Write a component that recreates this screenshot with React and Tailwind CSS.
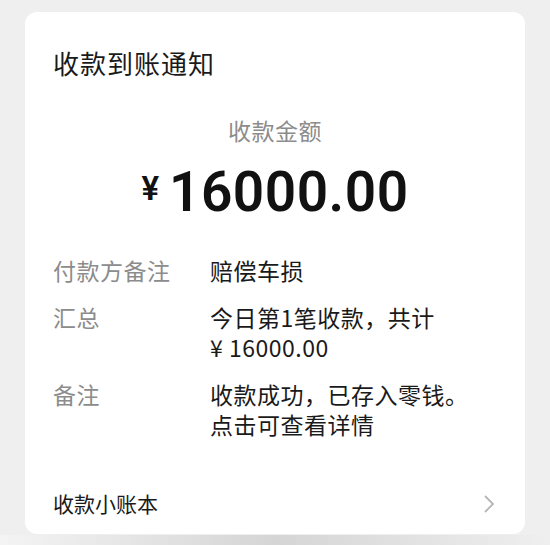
import React from 'react'

const rows = [
  { label: "付款方备注", lines: ["赔偿车损"] },
  { label: "汇总", lines: ["今日第1笔收款，共计", "¥ 16000.00"] },
  { label: "备注", lines: ["收款成功，已存入零钱。", "点击可查看详情"] },
];

const PayNotice = () => {
  return (
    <div className="w-[550px] h-[545px] bg-[#efefef] flex flex-col pt-[12px] overflow-hidden"
      style={{ fontFamily: '"Noto Sans CJK SC", "Noto Sans", sans-serif' }}>
      <div className="ml-[25px] w-[500px] h-[523px] bg-white rounded-xl flex flex-col px-[28px] pt-[33px] pb-[15px]">
        <h1 className="text-[26px] leading-[36px] text-[#1a1a1a] tracking-[1px]">收款到账通知</h1>

        <div className="mt-[33px] text-center text-[23px] leading-[32px] text-[#8c8c8c] tracking-[0.5px]">收款金额</div>
        <div className="mt-[14px] h-[64px] flex items-center justify-center gap-[10px] text-[#111] font-semibold"
          style={{ fontFamily: 'Roboto, "Noto Sans", sans-serif' }}>
          <span className="text-[33px] leading-none mt-[-8px]">¥</span>
          <span className="text-[55px] leading-none tracking-[0.5px]">16000.00</span>
        </div>

        <div className="mt-[31px] flex flex-col gap-[17px]">
          {rows.map((r) => (
            <div key={r.label} className="flex text-[23px] leading-[30px]">
              <div className="w-[157px] shrink-0 text-[#8c8c8c] tracking-[0.5px]">{r.label}</div>
              <div className="text-[#1a1a1a] tracking-[0.5px]">
                {r.lines.map((l) => (
                  <div key={l}>{l}</div>
                ))}
              </div>
            </div>
          ))}
        </div>

        <div className="mt-auto flex items-center justify-between h-[30px]">
          <span className="text-[21px] text-[#1a1a1a]">收款小账本</span>
          <svg width="12" height="20" viewBox="0 0 12 20" className="mr-[2px]">
            <path d="M2 2 L10 10 L2 18" fill="none" stroke="#b5b5b5" strokeWidth="1.8" />
          </svg>
        </div>
      </div>
      <div className="mt-[1px] h-[10px] bg-gradient-to-r from-[#f4f4f4] via-[#d5d5d5] to-[#efefef]" />
    </div>
  );
};

export default function App() {
  return <PayNotice />;
}
